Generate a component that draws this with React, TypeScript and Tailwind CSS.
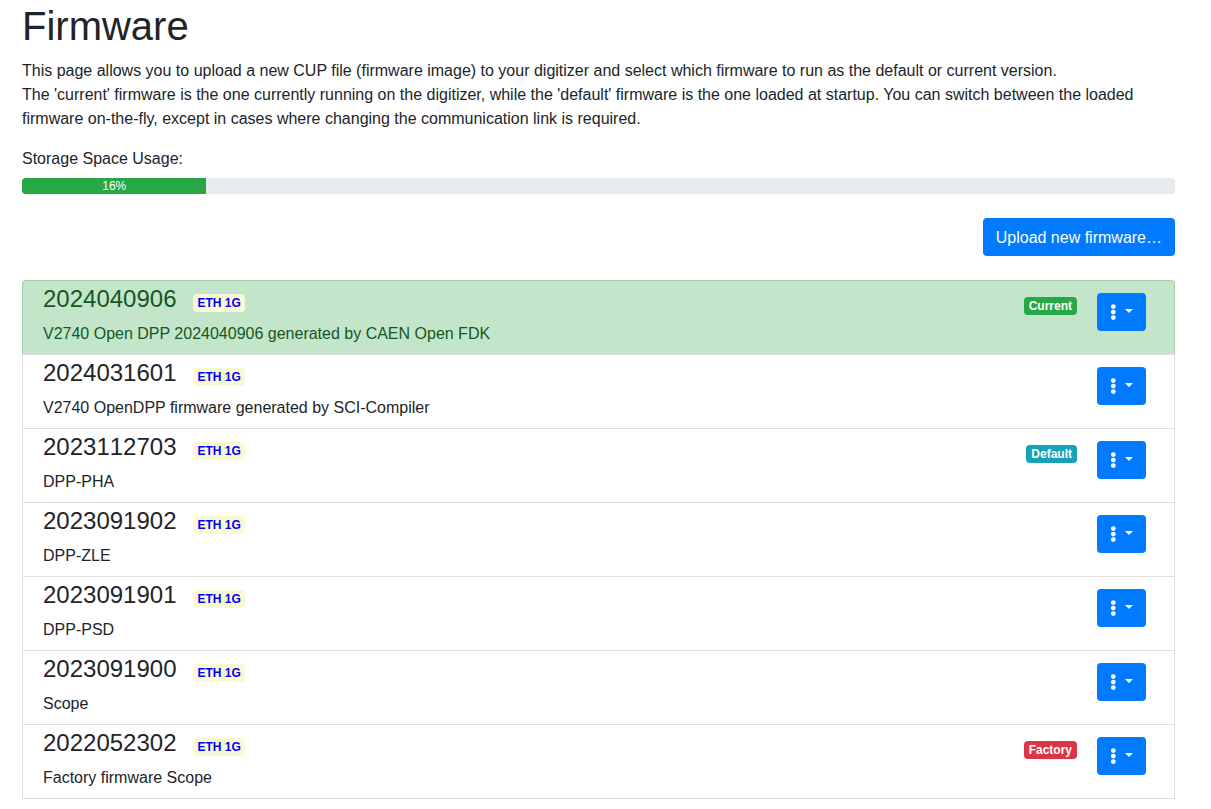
type Status = "Current" | "Default" | "Factory";

interface Firmware {
  version: string;
  link: string;
  description: string;
  status?: Status;
}

const usage = 16;

const firmwares: Firmware[] = [
  {
    version: "2024040906",
    link: "ETH 1G",
    description: "V2740 Open DPP 2024040906 generated by CAEN Open FDK",
    status: "Current",
  },
  {
    version: "2024031601",
    link: "ETH 1G",
    description: "V2740 OpenDPP firmware generated by SCI-Compiler",
  },
  { version: "2023112703", link: "ETH 1G", description: "DPP-PHA", status: "Default" },
  { version: "2023091902", link: "ETH 1G", description: "DPP-ZLE" },
  { version: "2023091901", link: "ETH 1G", description: "DPP-PSD" },
  { version: "2023091900", link: "ETH 1G", description: "Scope" },
  {
    version: "2022052302",
    link: "ETH 1G",
    description: "Factory firmware Scope",
    status: "Factory",
  },
];

const statusColor: Record<Status, string> = {
  Current: "bg-[#28a745]",
  Default: "bg-[#17a2b8]",
  Factory: "bg-[#dc3545]",
};

function Badge({ className, children }: { className: string; children: string }) {
  return (
    <span
      className={`rounded py-[3px] text-[12px] leading-[12px] font-bold whitespace-nowrap ${className}`}
    >
      {children}
    </span>
  );
}

function ActionsButton({ version }: { version: string }) {
  return (
    <button
      type="button"
      aria-label={`Actions for firmware ${version}`}
      aria-haspopup="menu"
      className="mt-3 flex h-[38px] items-center gap-[9px] rounded bg-[#007bff] px-[13px] text-white hover:bg-[#0069d9]"
    >
      <svg viewBox="0 0 192 512" className="h-4 w-[6px]" fill="currentColor" aria-hidden="true">
        <circle cx="106" cy="80" r="76" />
        <circle cx="106" cy="256" r="76" />
        <circle cx="106" cy="432" r="76" />
      </svg>
      <svg viewBox="0 0 8 6" className="h-[6px] w-2" fill="currentColor" aria-hidden="true">
        <path d="M0 0h8L4 4z" />
      </svg>
    </button>
  );
}

function FirmwareRow({ firmware }: { firmware: Firmware }) {
  const { version, link, description, status } = firmware;
  const tone = status === "Current" ? "bg-[#c3e6cb] text-[#155724]" : "bg-white";
  return (
    <li
      className={`flex items-start border-x border-t border-black/[0.125] pr-7 pl-5 first:rounded-t last:border-b ${tone}`}
    >
      <div className="min-w-0 flex-1 pt-[3px] pb-2">
        <div className="mb-[9px] flex items-baseline gap-[17px]">
          <h2 className="text-[24px] leading-[29px] [font-kerning:none]">{version}</h2>
          <Badge className="bg-[#fafad2] px-1 text-[#0000ff]">{link}</Badge>
        </div>
        <p>{description}</p>
      </div>
      <div className="flex items-start gap-5">
        {status && (
          <div className="flex pt-4">
            <Badge className={`px-[5px] text-white ${statusColor[status]}`}>{status}</Badge>
          </div>
        )}
        <ActionsButton version={version} />
      </div>
    </li>
  );
}

export default function App() {
  return (
    <main className="bg-white pt-[2px] pr-9 pl-[22px] font-['Liberation_Sans',Arial,sans-serif] text-[16px] leading-6 text-[#212529]">
      <h1 className="mb-[9px] text-[40px] leading-[48px]">Firmware</h1>
      <p className="mb-4">
        This page allows you to upload a new CUP file (firmware image) to your digitizer and select
        which firmware to run as the default or current version.
        <br />
        The 'current' firmware is the one currently running on the digitizer, while the 'default'
        firmware is the one loaded at startup. You can switch between the loaded firmware
        on-the-fly, except in cases where changing the communication link is required.
      </p>

      <p id="storage-label" className="mb-[7px]">
        Storage Space Usage:
      </p>
      <div
        role="progressbar"
        aria-labelledby="storage-label"
        aria-valuenow={usage}
        aria-valuemin={0}
        aria-valuemax={100}
        className="mb-6 flex h-4 overflow-hidden rounded bg-[#e9ecef] text-[12px] leading-4"
      >
        <div className="bg-[#28a745] text-center text-white" style={{ width: `${usage}%` }}>
          {usage}%
        </div>
      </div>

      <div className="mb-6 flex justify-end">
        <button
          type="button"
          className="rounded bg-[#007bff] px-[13px] pt-2 pb-[6px] text-white hover:bg-[#0069d9]"
        >
          Upload new firmware…
        </button>
      </div>

      <ul>
        {firmwares.map((firmware) => (
          <FirmwareRow key={firmware.version} firmware={firmware} />
        ))}
      </ul>
    </main>
  );
}
